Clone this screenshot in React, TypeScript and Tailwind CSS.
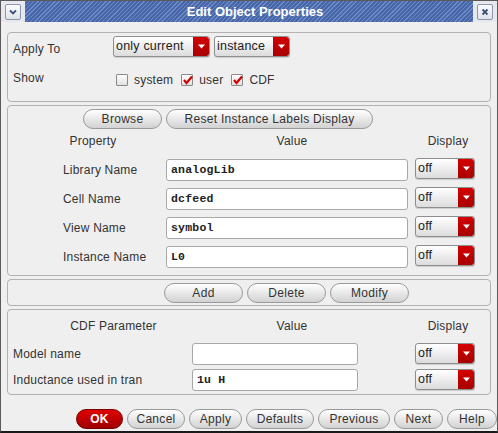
import React from "react";

const font = "font-['Liberation_Sans',Arial,sans-serif]";

function Arrow() {
  return (
    <span className="flex w-[16px] items-center justify-center self-stretch rounded-r-[3px] bg-gradient-to-b from-[#d40000] to-[#a80000]">
      <svg width="7" height="5" viewBox="0 0 7 5">
        <path d="M0 0.5h7L3.5 4.5z" fill="#fff" />
      </svg>
    </span>
  );
}

function Select({ value, w }: { value: string; w: string }) {
  return (
    <div
      className={`flex h-[21px] ${w} items-stretch rounded-[3px] border border-[#8e8e8e] bg-gradient-to-b from-white to-[#dcdcdc] shadow-[0_1px_1px_rgba(0,0,0,0.15)]`}
    >
      <span className="flex-1 pl-[2px] text-[12.5px] leading-[18px] text-[#222]">
        {value}
      </span>
      <Arrow />
    </div>
  );
}

function Check({ checked, label }: { checked: boolean; label: string }) {
  return (
    <label className="flex items-center gap-[6px]">
      <span className="relative h-[12px] w-[12px] rounded-[1px] border border-[#8a8a8a] bg-gradient-to-b from-white to-[#e0e0e0]">
        {checked && (
          <svg
            className="absolute left-[1px] top-[0px]"
            width="10"
            height="10"
            viewBox="0 0 10 10"
          >
            <path
              d="M1 5l2.5 3L9 1.5"
              stroke="#d40000"
              strokeWidth="2.2"
              fill="none"
            />
          </svg>
        )}
      </span>
      <span>{label}</span>
    </label>
  );
}

function Btn({ label, w, red }: { label: string; w: string; red?: boolean }) {
  return (
    <button
      className={`flex h-[20px] ${w} items-center justify-center rounded-full border text-[12px] tracking-[0.3px] ${
        red
          ? "border-[#7a0000] bg-gradient-to-b from-[#e00000] to-[#a00000] font-bold text-white"
          : "border-[#9a9a9a] bg-gradient-to-b from-white to-[#d2d2d2] text-[#333]"
      }`}
    >
      {label}
    </button>
  );
}

function TextField({ value, w }: { value: string; w: string }) {
  return (
    <div
      className={`h-[22px] ${w} rounded-[3px] border border-[#a8a8a8] bg-white pl-[4px] font-['Liberation_Mono',monospace] text-[11.5px] font-bold leading-[20px] text-[#222]`}
    >
      {value}
    </div>
  );
}

const group = "rounded-[4px] border border-[#b2b2b2]";

export default function App() {
  const props = [
    ["Library Name", "analogLib"],
    ["Cell Name", "dcfeed"],
    ["View Name", "symbol"],
    ["Instance Name", "L0"],
  ];

  return (
    <div
      className={`${font} flex h-[433px] w-[498px] flex-col border border-b-2 border-[#5a5a5a] border-b-[#1a1a1a] bg-[#efefef] text-[12px] tracking-[0.2px] text-[#333]`}
    >
      {/* title bar */}
      <div className="flex h-[21px] items-stretch bg-[#e6e8ee]">
        <div className="flex w-[24px] items-center justify-center">
          <div className="flex h-[16px] w-[16px] items-center justify-center rounded-[2px] border border-[#8d96ab] bg-gradient-to-b from-[#fafbfd] to-[#dfe3ea]">
            <svg width="8" height="6" viewBox="0 0 8 6">
              <path d="M1 1.5l3 3 3-3" stroke="#3d4f7a" strokeWidth="1.8" fill="none" />
            </svg>
          </div>
        </div>
        <div className="flex flex-1 items-center justify-center bg-[repeating-linear-gradient(135deg,#6d8ac6_0px,#6d8ac6_1px,#4867a9_1px,#4867a9_3px)] pl-3 text-[13px] font-bold tracking-normal text-white">
          Edit Object Properties
        </div>
        <div className="flex w-[24px] items-center justify-center">
          <div className="flex h-[16px] w-[16px] items-center justify-center rounded-[2px] border border-[#8d96ab] bg-gradient-to-b from-[#fafbfd] to-[#dfe3ea]">
            <svg width="8" height="8" viewBox="0 0 8 8">
              <path d="M1.5 1.5l5 5M6.5 1.5l-5 5" stroke="#3d4f7a" strokeWidth="1.8" />
            </svg>
          </div>
        </div>
      </div>

      <div className="flex flex-col gap-[3px] px-[6px] pt-[10px]">
        {/* Apply To / Show */}
        <div className={`${group} flex h-[70px] flex-col pl-[5px] pt-[3px]`}>
          <div className="flex h-[21px] items-center">
            <span className="w-[100px] pt-[4px]">Apply To</span>
            <div className="flex gap-[4px]">
              <Select value="only current" w="w-[97px]" />
              <Select value="instance" w="w-[76px]" />
            </div>
          </div>
          <div className="mt-[12px] flex items-center">
            <span className="w-[103px] pb-[3px]">Show</span>
            <div className="flex gap-[8px]">
              <Check checked={false} label="system" />
              <Check checked label="user" />
              <Check checked label="CDF" />
            </div>
          </div>
        </div>

        {/* Properties */}
        <div className={`${group} flex h-[171px] flex-col pt-[3px]`}>
          <div className="flex gap-[4px] pl-[75px]">
            <Btn label="Browse" w="w-[79px]" />
            <Btn label="Reset Instance Labels Display" w="w-[207px]" />
          </div>
          <div className="mt-[3px] flex h-[18px] items-center">
            <span className="ml-[40px] w-[90px] text-center">Property</span>
            <span className="ml-[104px] w-[100px] text-center">Value</span>
            <span className="ml-[76px] w-[60px] text-center">Display</span>
          </div>
          <div className="mt-[9px] flex flex-col gap-[7px]">
            {props.map(([name, value]) => (
              <div key={name} className="flex h-[22px] items-center">
                <span className="ml-[55px] w-[103px]">{name}</span>
                <TextField value={value} w="w-[242px]" />
                <div className="ml-[7px] -mt-[3px]">
                  <Select value="off" w="w-[60px]" />
                </div>
              </div>
            ))}
          </div>
        </div>

        {/* Add / Delete / Modify */}
        <div className={`${group} flex h-[27px] gap-[4px] pl-[156px] pt-[3px]`}>
          <Btn label="Add" w="w-[79px]" />
          <Btn label="Delete" w="w-[79px]" />
          <Btn label="Modify" w="w-[79px]" />
        </div>

        {/* CDF parameters */}
        <div className={`${group} flex h-[86px] flex-col pt-[8px]`}>
          <div className="flex h-[16px] items-center">
            <span className="ml-[55px] w-[101px] text-center">CDF Parameter</span>
            <span className="ml-[78px] w-[100px] text-center">Value</span>
            <span className="ml-[76px] w-[60px] text-center">Display</span>
          </div>
          <div className="mt-[9px] flex flex-col gap-[4px]">
            {[
              ["Model name", ""],
              ["Inductance used in tran", "1u H"],
            ].map(([name, value]) => (
              <div key={name} className="flex h-[22px] items-center">
                <span className="ml-[5px] w-[179px]">{name}</span>
                <TextField value={value} w="w-[166px]" />
                <div className="ml-[57px] -mt-[1px]">
                  <Select value="off" w="w-[60px]" />
                </div>
              </div>
            ))}
          </div>
        </div>
      </div>

      {/* dialog buttons */}
      <div className="mt-[14px] flex gap-[4px] pl-[75px]">
        <Btn label="OK" w="w-[47px]" red />
        <Btn label="Cancel" w="w-[58px]" />
        <Btn label="Apply" w="w-[53px]" />
        <Btn label="Defaults" w="w-[68px]" />
        <Btn label="Previous" w="w-[72px]" />
        <Btn label="Next" w="w-[49px]" />
        <Btn label="Help" w="w-[50px]" />
      </div>
    </div>
  );
}
